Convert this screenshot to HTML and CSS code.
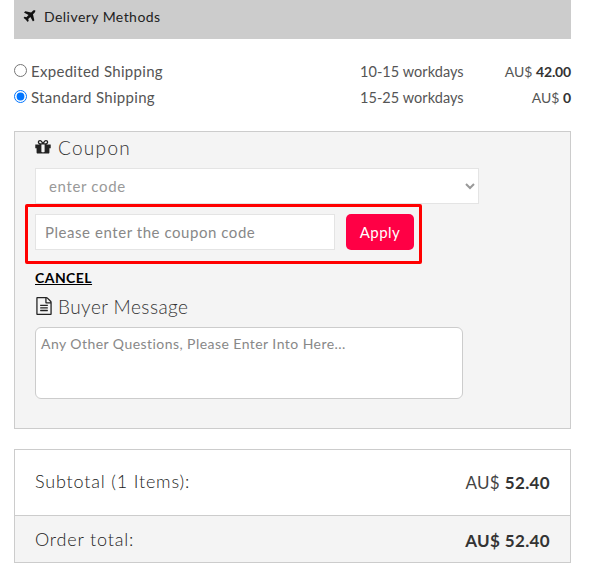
FILE: index.html
```html
<!DOCTYPE html>
<html lang="en">
  <head>
    <meta charset="UTF-8" />
    <meta name="viewport" content="width=device-width, initial-scale=1.0" />
    <title>Checkout</title>
    <link rel="stylesheet" href="styles.css">
  </head>
  <body>
    <div class="container">
      <div class="delivery-head">
        <svg class="icon-plane" viewBox="0 0 1408 1792"><path d="M1376 160q44 52 12 148t-108 172l-161 161 160 696q5 19-12 33l-128 96q-7 6-19 6-4 0-7-1-15-3-21-16l-279-508-259 259 53 194q5 17-8 31l-96 96q-9 9-23 9h-2q-15-2-24-13l-189-252-252-189q-11-7-13-23-1-13 9-25l96-97q9-9 23-9 6 0 8 1l194 53 259-259-508-279q-14-8-17-24-2-16 9-27l128-128q14-13 30-8l665 159 160-160q76-76 172-108t148 12z"/></svg>
        <span>Delivery Methods</span>
      </div>

      <div class="methods">
        <label class="method">
          <span class="method-name"><input type="radio" name="ship" />Expedited Shipping</span>
          <span class="method-time">10-15 workdays</span>
          <span class="method-price">AU$ <b>42.00</b></span>
        </label>
        <label class="method">
          <span class="method-name"><input type="radio" name="ship" checked />Standard Shipping</span>
          <span class="method-time">15-25 workdays</span>
          <span class="method-price">AU$ <b>0</b></span>
        </label>
      </div>

      <div class="panel">
        <h3 class="panel-title coupon-title">
          <svg class="icon" viewBox="0 0 1792 1792"><path d="M1056 1356v-716h-320v716q0 25 18 38.5t46 13.5h192q28 0 46-13.5t18-38.5zm-456-844h195l-126-161q-26-31-69-31-40 0-68 28t-28 68 28 68 68 28zm688-96q0-40-28-68t-68-28q-43 0-69 31l-125 161h194q40 0 68-28t28-68zm376 256v320q0 14-9 23t-23 9h-96v416q0 40-28 68t-68 28h-1088q-40 0-68-28t-28-68v-416h-96q-14 0-23-9t-9-23v-320q0-14 9-23t23-9h440q-93 0-158.5-65.5t-65.5-158.5 65.5-158.5 158.5-65.5q107 0 168 77l128 165 128-165q61-77 168-77 93 0 158.5 65.5t65.5 158.5-65.5 158.5-158.5 65.5h440q14 0 23 9t9 23z"/></svg>
          Coupon
        </h3>
        <select class="coupon-select">
          <option>enter code</option>
        </select>
        <div class="coupon-row">
          <input type="text" class="coupon-input" placeholder="Please enter the coupon code" />
          <button class="apply-btn">Apply</button>
        </div>
        <a href="#" class="cancel-link">CANCEL</a>
        <h3 class="panel-title message-title">
          <svg class="icon" viewBox="0 0 1792 1792"><path d="M1596 380q28 28 48 76t20 88v1152q0 40-28 68t-68 28h-1344q-40 0-68-28t-28-68v-1600q0-40 28-68t68-28h896q40 0 88 20t76 48zm-444-244v376h376q-10-29-22-41l-313-313q-12-12-41-22zm384 1528v-1024h-416q-40 0-68-28t-28-68v-416h-768v1536h1280zm-1024-864q0-14 9-23t23-9h704q14 0 23 9t9 23v64q0 14-9 23t-23 9h-704q-14 0-23-9t-9-23v-64zm736 224q14 0 23 9t9 23v64q0 14-9 23t-23 9h-704q-14 0-23-9t-9-23v-64q0-14 9-23t23-9h704zm0 256q14 0 23 9t9 23v64q0 14-9 23t-23 9h-704q-14 0-23-9t-9-23v-64q0-14 9-23t23-9h704z"/></svg>
          Buyer Message
        </h3>
        <textarea class="message" placeholder="Any Other Questions, Please Enter Into Here..."></textarea>
      </div>

      <div class="summary">
        <div class="summary-row">
          <span class="summary-label">Subtotal (1 Items):</span>
          <span class="amount">AU$ <b>52.40</b></span>
        </div>
        <div class="summary-row total">
          <span class="summary-label">Order total:</span>
          <span class="amount"><b>AU$ 52.40</b></span>
        </div>
      </div>
    </div>
  </body>
</html>
```

FILE: styles.css
```css
body {
  font-family: Lato, "Liberation Sans", sans-serif;
  margin: 0;
  background-color: white;
  color: #333;
  font-size: 14px;
  letter-spacing: 0.45px;
}
.container {
  width: 557px;
  margin-left: 14px;
}
.delivery-head {
  display: flex;
  align-items: center;
  gap: 8px;
  height: 39px;
  padding: 0 0 7px 9px;
  box-sizing: border-box;
  background-color: #ccc;
  color: #222;
}
.icon-plane {
  width: 13px;
  height: 15px;
  fill: #111;
}
.methods {
  padding-top: 19px;
}
.method {
  display: flex;
  align-items: center;
  height: 26px;
}
.method-name {
  display: flex;
  align-items: center;
  width: 346px;
  color: #555;
  font-size: 15px;
  letter-spacing: 0.3px;
}
.method-name input {
  width: 13px;
  height: 13px;
  margin: 0 4px 2px 0;
}
.method-time {
  width: 110px;
  color: #555;
  font-size: 14.5px;
  letter-spacing: 0.05px;
}
.method-price {
  flex: 1;
  text-align: right;
  color: #555;
  letter-spacing: 0;
}
.method-price b {
  color: #333;
  letter-spacing: -0.15px;
}
.panel {
  margin-top: 21px;
  height: 298px;
  padding: 3px 20px 0;
  box-sizing: border-box;
  background-color: #f4f4f4;
  border: 1px solid #ccc;
}
.panel-title {
  display: flex;
  align-items: center;
  gap: 5px;
  margin: 0;
  height: 24px;
  font-size: 19px;
  font-weight: 300;
  color: #333;
}
.coupon-title {
  gap: 6px;
  letter-spacing: 1.3px;
}
.coupon-title .icon {
  margin-left: -1px;
}
.icon {
  width: 18px;
  height: 18px;
  fill: #222;
}
.coupon-select {
  display: block;
  width: 444px;
  height: 36px;
  margin-top: 9px;
  padding-left: 9px;
  background-color: white;
  border: 1px solid #e4e4e4;
  border-radius: 0;
  color: #999;
  font: inherit;
  font-size: 15px;
  letter-spacing: 0.65px;
}
.coupon-row {
  display: flex;
  gap: 11px;
  width: 397px;
  height: 60px;
  margin-left: -10px;
  padding: 7px 5px 11px 7px;
  box-sizing: border-box;
  border: 3px solid #f00;
  border-radius: 2px;
}
.coupon-input {
  width: 300px;
  padding: 0 9px 1px;
  box-sizing: border-box;
  background-color: white;
  border: 1px solid #e4e4e4;
  font: inherit;
  font-size: 15px;
  letter-spacing: 0.55px;
}
.coupon-input::placeholder,
.message::placeholder {
  color: #888;
  opacity: 1;
}
.apply-btn {
  width: 68px;
  padding: 0;
  background-color: #ff0045;
  color: white;
  border: none;
  border-radius: 5px;
  font: inherit;
  font-size: 15px;
  letter-spacing: inherit;
}
.cancel-link {
  display: block;
  margin-top: 5px;
  height: 18px;
  line-height: 18px;
  color: black;
  font-weight: bold;
  width: max-content;
}
.message-title {
  margin-top: 7px;
}
.message {
  display: block;
  width: 428px;
  height: 72px;
  margin-top: 9px;
  padding: 7px 5px;
  box-sizing: border-box;
  background-color: white;
  border: 1px solid #ccc;
  border-radius: 6px;
  resize: none;
  font: inherit;
  letter-spacing: inherit;
}
.summary {
  margin-top: 20px;
  border: 1px solid #ccc;
}
.summary-row {
  display: flex;
  justify-content: space-between;
  align-items: center;
  height: 65px;
  padding: 0 20px;
  font-size: 17px;
  color: #444;
}
.summary-label {
  padding-bottom: 3px;
  font-size: 18px;
  font-weight: 300;
  color: #222;
  letter-spacing: 0.82px;
}
.amount {
  letter-spacing: 0.35px;
}
.amount b {
  color: #333;
}
.total {
  height: 47px;
  padding-top: 2px;
  box-sizing: border-box;
  background-color: #f4f4f4;
  border-top: 1px solid #ccc;
}
```
